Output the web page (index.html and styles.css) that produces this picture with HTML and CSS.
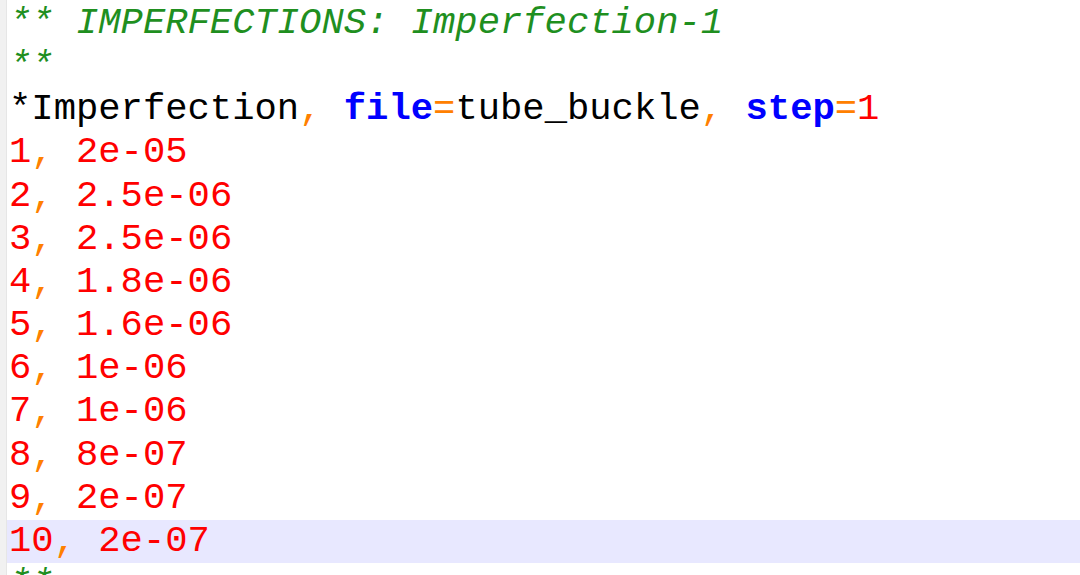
FILE: index.html
```html
<!DOCTYPE html>
<html>
<head>
<meta charset="utf-8">
<link rel="stylesheet" href="styles.css">
</head>
<body>
<div class="editor">
  <div class="gutter"></div>
  <div class="code">
    <div class="line"><span class="cm">** IMPERFECTIONS: Imperfection-1</span></div>
    <div class="line"><span class="cm">**</span></div>
    <div class="line"><span class="tx">*Imperfection</span><span class="op">,</span> <span class="kw">file</span><span class="op">=</span><span class="tx">tube_buckle</span><span class="op">,</span> <span class="kw">step</span><span class="op">=</span><span class="num">1</span></div>
    <div class="line"><span class="num">1</span><span class="op">,</span> <span class="num">2e-05</span></div>
    <div class="line"><span class="num">2</span><span class="op">,</span> <span class="num">2.5e-06</span></div>
    <div class="line"><span class="num">3</span><span class="op">,</span> <span class="num">2.5e-06</span></div>
    <div class="line"><span class="num">4</span><span class="op">,</span> <span class="num">1.8e-06</span></div>
    <div class="line"><span class="num">5</span><span class="op">,</span> <span class="num">1.6e-06</span></div>
    <div class="line"><span class="num">6</span><span class="op">,</span> <span class="num">1e-06</span></div>
    <div class="line"><span class="num">7</span><span class="op">,</span> <span class="num">1e-06</span></div>
    <div class="line"><span class="num">8</span><span class="op">,</span> <span class="num">8e-07</span></div>
    <div class="line"><span class="num">9</span><span class="op">,</span> <span class="num">2e-07</span></div>
    <div class="line current"><span class="num">10</span><span class="op">,</span> <span class="num">2e-07</span></div>
    <div class="line"><span class="cm">**</span></div>
  </div>
</div>
</body>
</html>
```

FILE: styles.css
```css
html, body {
  margin: 0;
  padding: 0;
  background: #ffffff;
  height: 100%;
  overflow: hidden;
}

.editor {
  display: flex;
  height: 575px;
}

.gutter {
  width: 6px;
  flex: none;
  background: #f1f1f1;
  border-right: 1px solid #e6e6e6;
}

.code {
  flex: 1;
  padding-top: 2px;
  font-family: "Liberation Mono", "Courier New", monospace;
  font-size: 37.2px;
}

.line {
  height: 43.17px;
  line-height: 43.17px;
  padding-left: 2px;
  white-space: pre;
}

.line.current {
  background: #e8e8ff;
}

.cm {
  color: #1f8f1f;
  font-style: italic;
}

.tx {
  color: #000000;
}

.op {
  color: #ff8000;
}

.kw {
  color: #0000ff;
  font-weight: bold;
}

.num {
  color: #ff0000;
}
```
